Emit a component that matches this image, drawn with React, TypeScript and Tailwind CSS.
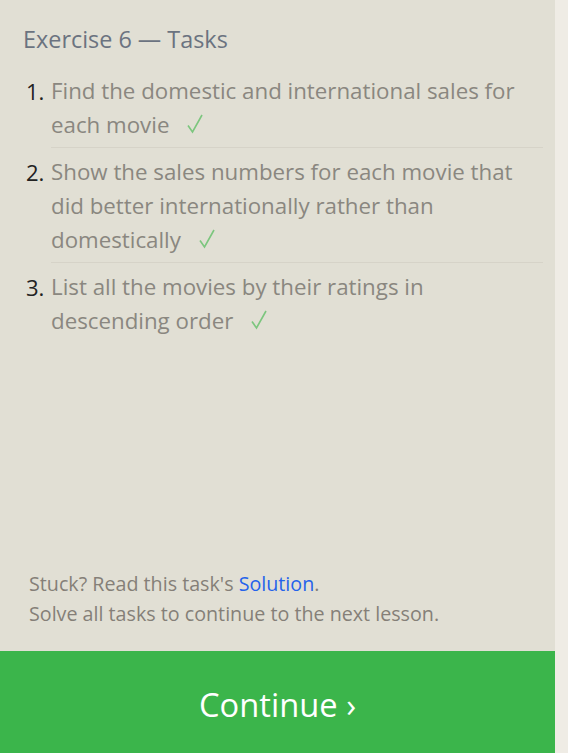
import React from "react";

const tasks = [
  "Find the domestic and international sales for each movie",
  "Show the sales numbers for each movie that did better internationally rather than domestically",
  "List all the movies by their ratings in descending order",
];

function Check() {
  return (
    <svg
      className="ml-[17px] inline-block align-[-2px]"
      width="18"
      height="22"
      viewBox="0 0 18 22"
      fill="none"
      stroke="#7cc67e"
      strokeWidth="1.6"
    >
      <path d="M2 12.5 L6.5 19 L16 2" />
    </svg>
  );
}

export default function App() {
  return (
    <div
      className="flex h-[753px] w-[568px] bg-[#efece5]"
      style={{ fontFamily: '"Open Sans", "Noto Sans", sans-serif' }}
    >
      <div className="flex w-[555px] flex-col bg-[#e1dfd4]">
        <div className="flex-1 pl-[23px] pr-[12px] pt-[22px]">
          <h2 className="text-[23.4px] leading-[34px] text-[#6b7380]">Exercise 6 — Tasks</h2>
          <ol className="mt-[18px]">
            {tasks.map((task, i) => (
              <li key={i} className="flex">
                <span className="w-[28px] shrink-0 pl-[3px] text-[22px] leading-[34px] text-[#222]">
                  {i + 1}.
                </span>
                <div
                  className={
                    "flex-1 pb-[5px] mb-[7px] text-[22.3px] leading-[34px] text-[#8a8780] " +
                    (i < tasks.length - 1 ? "border-b border-[#d6d3c8]" : "")
                  }
                >
                  {task}
                  <Check />
                </div>
              </li>
            ))}
          </ol>
        </div>
        <div className="px-[29px] pb-[22px] text-[19.7px] leading-[30px] text-[#857f78]">
          <p>
            Stuck? Read this task's <a className="text-[#2563eb]">Solution</a>.
          </p>
          <p>Solve all tasks to continue to the next lesson.</p>
        </div>
        <button className="flex h-[102px] w-full items-center justify-center bg-[#3bb54b] pt-[5px] text-[32.7px] text-white">
          Continue ›
        </button>
      </div>
    </div>
  );
}
